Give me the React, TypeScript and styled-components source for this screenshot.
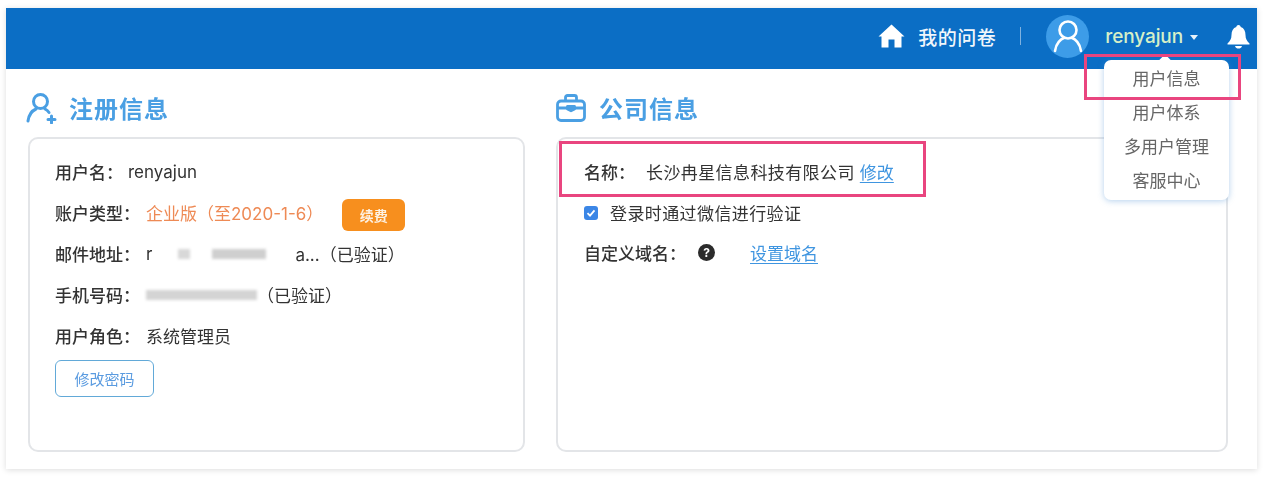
import { createGlobalStyle, styled } from "styled-components";

const GlobalStyle = createGlobalStyle`
  html, body {
    margin: 0;
    padding: 0;
    background: #ffffff;
  }
  body {
    font-family: "Inter", "Noto Sans CJK SC", sans-serif;
    color: #333333;
  }
`;

const CJK = `"Inter", "Noto Sans CJK SC", sans-serif`;

const Page = styled.div`
  width: 1271px;
  height: 481px;
  padding: 8px 14px 12px 6px;
  box-sizing: border-box;
  overflow: hidden;
  position: relative;
  filter: blur(0.5px);
`;

const Frame = styled.div`
  height: 461px;
  display: flex;
  flex-direction: column;
  background: #fff;
  box-shadow: 0 1px 6px rgba(0, 0, 0, 0.14);
`;

const TopBar = styled.header`
  height: 61px;
  flex-shrink: 0;
  box-sizing: border-box;
  background: #0b6ec5;
  display: flex;
  align-items: center;
  justify-content: flex-end;
  padding: 0 7px 5px 0;
  color: #fff;
  font-family: ${CJK};
`;

const HomeLink = styled.div`
  display: flex;
  align-items: center;
  gap: 13px;
  font-size: 19px;
  font-weight: 500;
  letter-spacing: 0.5px;
  color: #f1f6fb;
`;

const BarDivider = styled.span`
  width: 1px;
  height: 18px;
  background: #7fb2e0;
  margin: 0 25px 0 24px;
`;

const Avatar = styled.span`
  width: 43px;
  height: 43px;
  border-radius: 50%;
  background: #3d9ce8;
  display: flex;
  align-items: center;
  justify-content: center;
`;

const UserName = styled.span`
  margin-left: 16px;
  font-size: 19px;
  font-weight: 500;
  color: #d6f0c8;
  letter-spacing: -0.1px;
`;

const Caret = styled.span`
  width: 0;
  height: 0;
  margin-left: 7px;
  margin-top: 3px;
  border-left: 4px solid transparent;
  border-right: 4px solid transparent;
  border-top: 5px solid #e8f2fa;
`;

const BellWrap = styled.span`
  display: flex;
  margin-left: 29px;
`;

const Content = styled.main`
  flex: 1;
  display: grid;
  grid-template-columns: 497px 672px;
  column-gap: 31px;
  padding: 0 29px 17px 22px;
  min-height: 0;
`;

const Section = styled.section`
  display: flex;
  flex-direction: column;
  min-height: 0;
`;

const SectionTitle = styled.h2<{ $shift: number; $gap: number }>`
  height: 68px;
  margin: 0 0 0 ${({ $shift }) => $shift}px;
  padding-top: 9px;
  box-sizing: border-box;
  display: flex;
  align-items: center;
  gap: ${({ $gap }) => $gap}px;
  font-size: 24px;
  font-weight: 700;
  color: #4a9fe3;
  font-family: ${CJK};
  letter-spacing: 1px;
`;

const Panel = styled.div<{ $inset: number }>`
  flex: 1;
  border: 2px solid #e3e5e8;
  border-radius: 10px;
  box-sizing: border-box;
  padding: 12px ${({ $inset }) => $inset}px 0;
  font-size: 17px;
  font-family: ${CJK};
  color: #333;
`;

const Row = styled.div<{ $height?: number }>`
  height: ${({ $height }) => $height ?? 41}px;
  display: flex;
  align-items: center;
  white-space: nowrap;
`;

const Label = styled.span<{ $width: number }>`
  width: ${({ $width }) => $width}px;
  flex-shrink: 0;
  color: #333;
  font-weight: 500;
`;

const PlanText = styled.span`
  color: #ee8a55;
`;

const RenewButton = styled.button`
  width: 63px;
  height: 32px;
  margin: 4px 0 0 19px;
  border: none;
  border-radius: 6px;
  background: #f78f1e;
  color: #fdf1e2;
  font-size: 14px;
  font-weight: 700;
  font-family: ${CJK};
  padding: 0;
`;

const Masked = styled.span<{ $width: number; $tone: string; $gap?: number }>`
  display: inline-block;
  width: ${({ $width }) => $width}px;
  height: 10px;
  margin-left: ${({ $gap }) => $gap ?? 0}px;
  background: ${({ $tone }) => $tone};
  filter: blur(1.6px);
`;

const PushedText = styled.span`
  margin-left: 29px;
`;

const PasswordButton = styled.button`
  width: 99px;
  height: 37px;
  margin-top: 4px;
  border: 1px solid #62a9d8;
  border-radius: 6px;
  background: #fff;
  color: #5a9be0;
  font-size: 15px;
  font-family: ${CJK};
  padding: 0;
  display: block;
`;

const CompanyName = styled.span`
  letter-spacing: 0.4px;
  margin-right: 5px;
`;

const CompanyLink = styled.a`
  color: #3f95e0;
  text-decoration: underline;
  text-underline-offset: 3px;
`;

const CheckText = styled.span`
  letter-spacing: 0.4px;
`;

const CheckBox = styled.span`
  width: 14px;
  height: 14px;
  border-radius: 3px;
  background: #3b86e6;
  display: flex;
  align-items: center;
  justify-content: center;
  margin-right: 12px;
`;

const HelpDot = styled.span`
  width: 17px;
  height: 17px;
  border-radius: 50%;
  background: #2b2b2b;
  color: #fff;
  font-size: 12px;
  font-weight: 700;
  display: flex;
  align-items: center;
  justify-content: center;
  margin-right: 35px;
`;

const Highlight = styled.div<{ $x: number; $y: number; $w: number; $h: number }>`
  position: absolute;
  left: ${({ $x }) => $x}px;
  top: ${({ $y }) => $y}px;
  width: ${({ $w }) => $w}px;
  height: ${({ $h }) => $h}px;
  box-sizing: border-box;
  border: 3px solid #e9457f;
  pointer-events: none;
  z-index: 3;
`;

const Menu = styled.ul`
  position: absolute;
  left: 1104px;
  top: 60px;
  width: 125px;
  height: 140px;
  margin: 0;
  padding: 0 0 4px;
  box-sizing: border-box;
  list-style: none;
  background: #fff;
  border-radius: 7px;
  box-shadow: 0 1px 6px rgba(70, 140, 210, 0.4);
  font-family: ${CJK};
  font-size: 17px;
  color: #666;
  display: flex;
  flex-direction: column;
  z-index: 2;

  &::before {
    content: "";
    position: absolute;
    left: 57px;
    top: -4px;
    width: 8px;
    height: 8px;
    background: #fff;
    transform: rotate(45deg);
  }
`;

const MenuItem = styled.li`
  height: 35px;
  display: flex;
  align-items: center;
  justify-content: center;
  position: relative;
`;

function HomeIcon() {
  return (
    <svg width="27" height="24" viewBox="0 0 27 24" fill="#fff">
      <path d="M13.5 0.5 L26.5 12.5 L23.5 12.5 L23.5 23.5 L16.5 23.5 L16.5 15.5 L10.5 15.5 L10.5 23.5 L3.5 23.5 L3.5 12.5 L0.5 12.5 Z" />
    </svg>
  );
}

function AvatarIcon() {
  return (
    <svg width="30" height="34" viewBox="0 0 30 34" fill="none" stroke="#fff" strokeWidth="2.6" strokeLinecap="round">
      <circle cx="15" cy="11" r="8.5" />
      <path d="M2 32 C3 24 8 20 11 19 M28 32 C27 24 22 20 19 19" />
    </svg>
  );
}

function BellIcon() {
  return (
    <svg width="23" height="25" viewBox="0 0 23 25" fill="#fff">
      <path d="M11.5 1 C13 1 13.6 2 13.7 3 C17 4 18.5 7 18.5 11 C18.5 15 20 17 22.5 19.5 L22.5 20.5 L0.5 20.5 L0.5 19.5 C3 17 4.5 15 4.5 11 C4.5 7 6 4 9.3 3 C9.4 2 10 1 11.5 1 Z" />
      <path d="M8 22 L15 22 C14.5 23.8 13 24.6 11.5 24.6 C10 24.6 8.5 23.8 8 22 Z" />
    </svg>
  );
}

function UserPlusIcon() {
  return (
    <svg width="32" height="32" viewBox="0 0 32 32" fill="none" stroke="#4a9fe3" strokeWidth="3" strokeLinecap="round">
      <circle cx="14.5" cy="9.5" r="7" />
      <path d="M2 29 C3 22 6.5 18.5 10 17 M19 17 C20.5 17.8 22 19 23 20.5" />
      <path d="M25.5 24 V31 M22 27.5 H29" />
    </svg>
  );
}

function BriefcaseIcon() {
  return (
    <svg width="30" height="28" viewBox="0 0 30 28" fill="none" stroke="#4a9fe3" strokeWidth="2.8" strokeLinejoin="round">
      <rect x="1.5" y="7" width="27" height="19.5" rx="3.5" />
      <path d="M9.5 7 V3.5 C9.5 2.3 10.3 1.5 11.5 1.5 H18.5 C19.7 1.5 20.5 2.3 20.5 3.5 V7" />
      <path d="M1.5 14 H11.5 M18.5 14 H28.5" />
      <path d="M11.5 12.5 H18.5 V15 L15 16.8 L11.5 15 Z" fill="#4a9fe3" />
    </svg>
  );
}

export default function App() {
  return (
    <>
      <GlobalStyle />
      <Page>
        <Frame>
          <TopBar>
            <HomeLink>
              <HomeIcon />
              我的问卷
            </HomeLink>
            <BarDivider />
            <Avatar>
              <AvatarIcon />
            </Avatar>
            <UserName>renyajun</UserName>
            <Caret />
            <BellWrap>
              <BellIcon />
            </BellWrap>
          </TopBar>
          <Content>
            <Section>
              <SectionTitle $shift={-2} $gap={11}>
                <UserPlusIcon />
                注册信息
              </SectionTitle>
              <Panel $inset={25}>
                <Row>
                  <Label $width={73}>用户名：</Label>
                  renyajun
                </Row>
                <Row>
                  <Label $width={91}>账户类型：</Label>
                  <PlanText>企业版（至2020-1-6）</PlanText>
                  <RenewButton>续费</RenewButton>
                </Row>
                <Row>
                  <Label $width={91}>邮件地址：</Label>
                  r
                  <Masked $width={12} $tone="#d8d8d8" $gap={26} />
                  <Masked $width={54} $tone="#cfcfcf" $gap={22} />
                  <PushedText>a...（已验证）</PushedText>
                </Row>
                <Row>
                  <Label $width={91}>手机号码：</Label>
                  <Masked $width={111} $tone="#d4d4d4" />
                  （已验证）
                </Row>
                <Row>
                  <Label $width={91}>用户角色：</Label>
                  系统管理员
                </Row>
                <PasswordButton>修改密码</PasswordButton>
              </Panel>
            </Section>
            <Section>
              <SectionTitle $shift={0} $gap={13}>
                <BriefcaseIcon />
                公司信息
              </SectionTitle>
              <Panel $inset={26}>
                <Row $height={41}>
                  <Label $width={62}>名称：</Label>
                  <CompanyName>长沙冉星信息科技有限公司</CompanyName>
                  <CompanyLink>修改</CompanyLink>
                </Row>
                <Row>
                  <CheckBox>
                    <svg width="10" height="10" viewBox="0 0 10 10" fill="none" stroke="#fff" strokeWidth="1.8">
                      <path d="M1.5 5.2 L4 7.6 L8.5 2.4" />
                    </svg>
                  </CheckBox>
                  <CheckText>登录时通过微信进行验证</CheckText>
                </Row>
                <Row $height={39}>
                  <Label $width={114}>自定义域名：</Label>
                  <HelpDot>?</HelpDot>
                  <CompanyLink>设置域名</CompanyLink>
                </Row>
              </Panel>
            </Section>
          </Content>
        </Frame>
        <Menu>
          <MenuItem>用户信息</MenuItem>
          <MenuItem>用户体系</MenuItem>
          <MenuItem>多用户管理</MenuItem>
          <MenuItem>客服中心</MenuItem>
        </Menu>
        <Highlight $x={1084} $y={54} $w={157} $h={46} />
        <Highlight $x={559} $y={141} $w={367} $h={56} />
      </Page>
    </>
  );
}
